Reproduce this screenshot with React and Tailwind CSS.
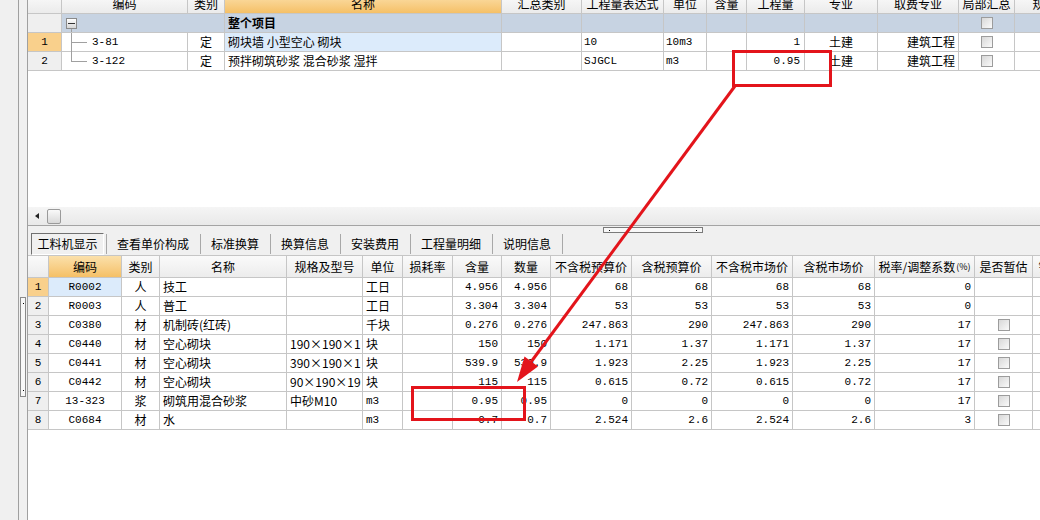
import React from "react";

const TOPW = ["w-[34px]", "w-[126px]", "w-[37px]", "w-[277px]", "w-[80px]", "w-[82px]", "w-[43px]", "w-[40px]", "w-[58px]", "w-[73px]", "w-[81px]", "w-[56px]", "w-[60px]"];
const TOPH = ["", "编码", "类别", "名称", "汇总类别", "工程量表达式", "单位", "含量", "工程量", "专业", "取费专业", "局部汇总", "规格"];

const LW = ["w-[21px]", "w-[73px]", "w-[38px]", "w-[127px]", "w-[76px]", "w-[40px]", "w-[50px]", "w-[49px]", "w-[49px]", "w-[81px]", "w-[80px]", "w-[81px]", "w-[82px]", "w-[100px]", "w-[58px]", "w-[60px]"];
const LH = ["", "编码", "类别", "名称", "规格及型号", "单位", "损耗率", "含量", "数量", "不含税预算价", "含税预算价", "不含税市场价", "含税市场价", "税率/调整系数", "是否暂估", "锁定数量"];

const ROWS = [
  ["1", "R0002", "人", "技工", "", "工日", "", "4.956", "4.956", "68", "68", "68", "68", "0", false],
  ["2", "R0003", "人", "普工", "", "工日", "", "3.304", "3.304", "53", "53", "53", "53", "0", false],
  ["3", "C0380", "材", "机制砖(红砖)", "", "千块", "", "0.276", "0.276", "247.863", "290", "247.863", "290", "17", true],
  ["4", "C0440", "材", "空心砌块", "190×190×1", "块", "", "150", "150", "1.171", "1.37", "1.171", "1.37", "17", true],
  ["5", "C0441", "材", "空心砌块", "390×190×1", "块", "", "539.9", "539.9", "1.923", "2.25", "1.923", "2.25", "17", true],
  ["6", "C0442", "材", "空心砌块", "90×190×19", "块", "", "115", "115", "0.615", "0.72", "0.615", "0.72", "17", true],
  ["7", "13-323", "浆", "砌筑用混合砂浆", "中砂M10", "m3", "", "0.95", "0.95", "0", "0", "0", "0", "17", true],
  ["8", "C0684", "材", "水", "", "m3", "", "0.7", "0.7", "2.524", "2.6", "2.524", "2.6", "3", true],
];

const MONO = "font-['Liberation_Mono',monospace] text-[11px]";
const LINE = "border-[#c6c6c6]";

function Check() {
  return (
    <div className="w-[12px] h-[12px] border border-[#9c9c9c] bg-linear-to-br from-[#d8d8d8] to-[#fafafa]" />
  );
}

function TopTable() {
  return (
    <div className="h-[207px] bg-white overflow-hidden">
      <div className={`flex h-[20px] -mt-[6px] border-b ${LINE} bg-linear-to-b from-[#fbfbfb] to-[#ebebeb]`}>
        {TOPH.map((l, i) => (
          <div
            key={i}
            className={`${TOPW[i]} shrink-0 border-r ${LINE} flex items-center justify-center whitespace-nowrap overflow-hidden ${i === 3 ? "bg-linear-to-b from-[#fbe0aa] to-[#f5c066]" : ""}`}
          >
            {l}
          </div>
        ))}
      </div>
      {/* 整个项目 */}
      <div className={`flex h-[19px] border-b ${LINE} bg-[#c7d3e2]`}>
        <div className={`${TOPW[0]} shrink-0 border-r ${LINE} bg-[#efefef]`} />
        <div className={`${TOPW[1]} shrink-0 relative`}>
          <div className="absolute left-[4px] top-[4px] w-[11px] h-[11px] border border-[#8a8a8a] bg-linear-to-b from-[#ffffff] to-[#d6d6d6] flex items-center justify-center">
            <div className="w-[7px] h-px bg-[#333]" />
          </div>
          <div className="absolute left-[9px] top-[15px] bottom-0 w-px bg-[#a0a0a0]" />
        </div>
        <div className={`${TOPW[2]} shrink-0 border-r ${LINE}`} />
        <div className={`${TOPW[3]} shrink-0 border-r ${LINE} pl-[3px] flex items-center font-bold`}>整个项目</div>
        <div className={`${TOPW[4]} shrink-0 border-r ${LINE}`} />
        <div className={`${TOPW[5]} shrink-0 border-r ${LINE}`} />
        <div className={`${TOPW[6]} shrink-0 border-r ${LINE}`} />
        <div className={`${TOPW[7]} shrink-0 border-r ${LINE}`} />
        <div className={`${TOPW[8]} shrink-0 border-r ${LINE}`} />
        <div className={`${TOPW[9]} shrink-0 border-r ${LINE}`} />
        <div className={`${TOPW[10]} shrink-0 border-r ${LINE}`} />
        <div className={`${TOPW[11]} shrink-0 border-r ${LINE} flex items-center justify-center`}><Check /></div>
        <div className={`${TOPW[12]} shrink-0 border-r ${LINE}`} />
      </div>
      {[
        { n: "1", code: "3-81", name: "砌块墙 小型空心 砌块", expr: "10", unit: "10m3", qty: "1", sel: true, last: false },
        { n: "2", code: "3-122", name: "预拌砌筑砂浆 混合砂浆 湿拌", expr: "SJGCL", unit: "m3", qty: "0.95", sel: false, last: true },
      ].map((r) => (
        <div key={r.n} className={`flex h-[19px] border-b ${LINE} bg-white`}>
          <div className={`${TOPW[0]} shrink-0 border-r ${LINE} flex items-center justify-center ${MONO} ${r.sel ? "bg-[#f9d08c]" : "bg-[#efefef]"}`}>{r.n}</div>
          <div className={`${TOPW[1]} shrink-0 border-r ${LINE} relative flex items-center pl-[30px] ${MONO}`}>
            <div className={`absolute left-[9px] top-0 w-px bg-[#a0a0a0] ${r.last ? "h-[10px]" : "h-[19px]"}`} />
            <div className="absolute left-[9px] top-[9px] w-[16px] h-px bg-[#a0a0a0]" />
            {r.code}
          </div>
          <div className={`${TOPW[2]} shrink-0 border-r ${LINE} flex items-center justify-center`}>定</div>
          <div className={`${TOPW[3]} shrink-0 border-r ${LINE} flex items-center pl-[3px] whitespace-nowrap overflow-hidden ${r.sel ? "bg-[#dcebfb]" : ""}`}>{r.name}</div>
          <div className={`${TOPW[4]} shrink-0 border-r ${LINE}`} />
          <div className={`${TOPW[5]} shrink-0 border-r ${LINE} flex items-center pl-[2px] ${MONO}`}>{r.expr}</div>
          <div className={`${TOPW[6]} shrink-0 border-r ${LINE} flex items-center pl-[2px] ${MONO}`}>{r.unit}</div>
          <div className={`${TOPW[7]} shrink-0 border-r ${LINE}`} />
          <div className={`${TOPW[8]} shrink-0 border-r ${LINE} flex items-center justify-end pr-[4px] ${MONO}`}>{r.qty}</div>
          <div className={`${TOPW[9]} shrink-0 border-r ${LINE} flex items-center justify-center`}>土建</div>
          <div className={`${TOPW[10]} shrink-0 border-r ${LINE} flex items-center justify-end pr-[3px]`}>建筑工程</div>
          <div className={`${TOPW[11]} shrink-0 border-r ${LINE} flex items-center justify-center`}><Check /></div>
          <div className={`${TOPW[12]} shrink-0 border-r ${LINE}`} />
        </div>
      ))}
    </div>
  );
}

function ScrollBar() {
  return (
    <div className="h-[19px] flex items-center bg-linear-to-b from-[#f5f5f5] to-[#e9e9e9] border-b border-[#a4a4a4]">
      <svg width="4" height="6" viewBox="0 0 4 6" className="ml-[7px]">
        <polygon points="4,0 0,3 4,6" fill="#222" />
      </svg>
      <div className="ml-[8px] w-[14px] h-[15px] border border-[#9a9a9a] rounded-[2px] bg-linear-to-b from-[#fafafa] to-[#d9d9d9]" />
    </div>
  );
}

function Toolbar() {
  const tabs = ["查看单价构成", "标准换算", "换算信息", "安装费用", "工程量明细", "说明信息"];
  return (
    <div className="h-[29px] flex flex-col bg-[#f0f0f0]">
      <div className="h-[7px] flex items-start">
        <div className="ml-[575px] mt-[1px] w-[100px] h-[6px] border border-[#7a7a7a] bg-[#f8f8f8] flex items-center justify-between px-[5px]">
          <div className="w-px h-px bg-black" />
          <div className="w-px h-px bg-black" />
        </div>
      </div>
      <div className="h-[22px] flex items-stretch">
        <div className="ml-[3px] w-[73px] border-t border-l border-[#707070] border-b border-r border-b-white border-r-white flex items-center justify-center">
          工料机显示
        </div>
        <div className="ml-[2px] w-px my-[1px] bg-[#a8a8a8]" />
        {tabs.map((t) => (
          <React.Fragment key={t}>
            <div className="pl-[10px] pr-[11px] flex items-center whitespace-nowrap">{t}</div>
            <div className="w-px my-[1px] bg-[#a8a8a8]" />
          </React.Fragment>
        ))}
      </div>
    </div>
  );
}

function LowerTable() {
  return (
    <div className="flex-1 bg-white overflow-hidden">
      <div className={`flex h-[23px] border-t border-b ${LINE} bg-linear-to-b from-[#fafafa] to-[#ececec]`}>
        {LH.map((l, i) => (
          <div
            key={i}
            className={`${LW[i]} shrink-0 border-r ${LINE} flex items-center justify-center whitespace-nowrap overflow-hidden ${i === 1 ? "bg-linear-to-b from-[#fbe0aa] to-[#f5c066]" : ""}`}
          >
            {l}
            {i === 13 && <span className="text-[9px] ml-px">(%)</span>}
          </div>
        ))}
      </div>
      {ROWS.map((r, ri) => (
        <div key={ri} className={`flex h-[19px] border-b ${LINE}`}>
          {LW.map((w, i) => {
            let cls = "";
            let content = r[i];
            if (i === 0) cls = `justify-center ${MONO} ${ri === 0 ? "bg-[#f9d08c]" : "bg-[#efefef]"}`;
            else if (i === 1) cls = `justify-center ${MONO} ${ri === 0 ? "bg-[#dcebfb]" : ""}`;
            else if (i === 2) cls = "justify-center";
            else if (i === 3 || i === 4) cls = "pl-[3px]";
            else if (i === 5) cls = `pl-[3px] ${r[5] === "m3" ? MONO : ""}`;
            else if (i >= 6 && i <= 13) cls = `justify-end pr-[3px] ${MONO}`;
            else if (i === 14) {
              cls = "justify-center";
              content = r[14] ? <Check /> : null;
            } else content = null;
            return (
              <div key={i} className={`${w} shrink-0 border-r ${LINE} flex items-center whitespace-nowrap overflow-hidden ${cls}`}>
                {content}
              </div>
            );
          })}
        </div>
      ))}
    </div>
  );
}

function Annotations() {
  return (
    <svg className="absolute left-0 top-0 pointer-events-none" width="1040" height="520" viewBox="0 0 1040 520">
      <rect x="733.5" y="51.5" width="97" height="34" fill="none" stroke="#e3141b" strokeWidth="3" />
      <rect x="412.5" y="387.5" width="112" height="32" fill="none" stroke="#e3141b" strokeWidth="3" />
      <line x1="735" y1="86" x2="531" y2="362" stroke="#e3141b" strokeWidth="3" />
      <polygon points="517,382 524.5,356.5 538,366.5" fill="#e3141b" />
    </svg>
  );
}

export default function App() {
  return (
    <div className="relative w-[1040px] h-[520px] overflow-hidden flex bg-white text-black text-[12px] leading-none font-['Noto_Sans_CJK_SC',sans-serif]">
      <div className="w-[19px] shrink-0 bg-[#f0f0f0] border-r border-[#a0a0a0]" />
      <div className="w-[9px] shrink-0 bg-[#f0f0f0] border-r border-[#a0a0a0] flex flex-col">
        <div className="mt-[297px] ml-px w-[6px] h-[100px] border border-[#8a8a8a] bg-[#f8f8f8] flex flex-col justify-between items-center py-[5px]">
          <div className="w-px h-px bg-black" />
          <div className="w-px h-px bg-black" />
        </div>
      </div>
      <div className="flex-1 min-w-0 flex flex-col overflow-hidden">
        <TopTable />
        <ScrollBar />
        <Toolbar />
        <LowerTable />
      </div>
      <Annotations />
    </div>
  );
}
